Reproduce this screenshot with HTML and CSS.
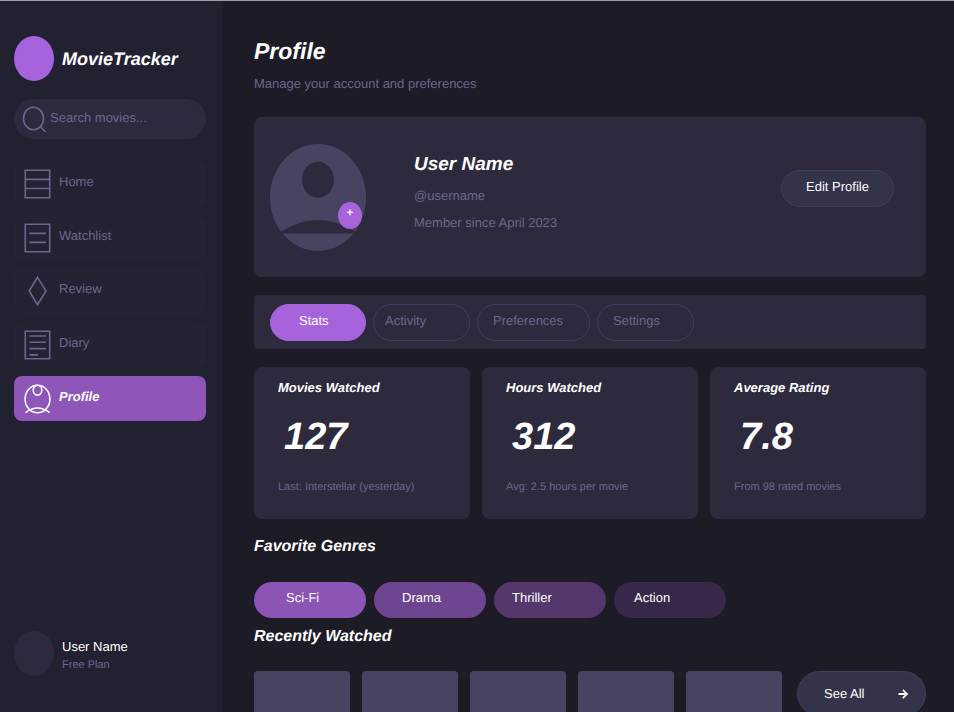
FILE: index.html
```html
<!DOCTYPE html>
<html lang="en">
<head>
<meta charset="utf-8">
<meta name="viewport" content="width=device-width, initial-scale=1">
<title>MovieTracker – Profile</title>
<link rel="stylesheet" href="styles.css">
</head>
<body>
<div class="app">
  <aside class="sidebar">
    <div class="brand">
      <span class="oval"></span>
      <span class="brand-name">MovieTracker</span>
    </div>
    <label class="search">
      <svg class="search-icon" width="26" height="28" viewBox="0 0 26 28" aria-hidden="true"><ellipse cx="11.5" cy="13.5" rx="10" ry="11.3"/><path d="M18 21.5L23.5 27"/></svg>
      <input type="text" placeholder="Search movies..." aria-label="Search movies">
    </label>
    <nav class="nav">
      <a class="nav-item" href="#home">
        <svg width="27" height="30" viewBox="0 0 27 30" aria-hidden="true"><path d="M1.3 1.3H25.7V28.7H1.3ZM1.3 10.4H25.7M1.3 19.5H25.7"/></svg>
        <span>Home</span>
      </a>
      <a class="nav-item" href="#watchlist">
        <svg width="27" height="30" viewBox="0 0 27 30" aria-hidden="true"><path d="M1.3 1.3H25.7V28.7H1.3ZM5.5 10.4H22M5.5 19.4H22"/></svg>
        <span>Watchlist</span>
      </a>
      <a class="nav-item" href="#review">
        <svg width="27" height="30" viewBox="0 0 27 30" aria-hidden="true"><path d="M13.5 1.3L22 15L13.5 28.7L5.2 15Z"/></svg>
        <span>Review</span>
      </a>
      <a class="nav-item" href="#diary">
        <svg width="27" height="30" viewBox="0 0 27 30" aria-hidden="true"><path d="M1.3 1.3H25.7V28.7H1.3ZM5.5 6H22M5.5 12.3H22M5.5 18.6H22M5.5 24.9H14"/></svg>
        <span>Diary</span>
      </a>
      <a class="nav-item active" href="#profile" aria-current="page">
        <svg width="27" height="30" viewBox="0 0 27 30" aria-hidden="true"><ellipse cx="13.5" cy="15" rx="12.4" ry="13.8"/><ellipse cx="13.5" cy="6.2" rx="4.3" ry="4.9"/><path d="M1.5 28.7Q13.5 19.3 25.7 28.7"/></svg>
        <span>Profile</span>
      </a>
    </nav>
    <div class="account">
      <span class="oval oval-muted"></span>
      <div class="account-text">
        <div class="account-name">User Name</div>
        <div class="account-plan">Free Plan</div>
      </div>
    </div>
  </aside>

  <main class="main">
    <header class="page-head">
      <h1>Profile</h1>
      <p>Manage your account and preferences</p>
    </header>

    <section class="card profile">
      <div class="avatar">
        <svg width="96" height="107" viewBox="0 0 96 107" aria-hidden="true">
          <ellipse class="avatar-bg" cx="48" cy="53.5" rx="48" ry="53.5"/>
          <ellipse class="avatar-fg" cx="48" cy="35.7" rx="16" ry="18"/>
          <path class="avatar-fg" d="M8 89.5Q48 62.5 88 89.5Z"/>
        </svg>
        <button class="badge" type="button" aria-label="Change photo">+</button>
      </div>
      <div class="profile-info">
        <h2>User Name</h2>
        <p>@username</p>
        <p>Member since April 2023</p>
      </div>
      <button class="btn btn-edit" type="button">Edit Profile</button>
    </section>

    <div class="tabs">
      <button class="tab tab-on" type="button">Stats</button>
      <button class="tab tab-tight" type="button">Activity</button>
      <button class="tab tab-wide" type="button">Preferences</button>
      <button class="tab" type="button">Settings</button>
    </div>

    <section class="stats">
      <article class="card stat"><h3>Movies Watched</h3><strong>127</strong><p>Last: Interstellar (yesterday)</p></article>
      <article class="card stat"><h3>Hours Watched</h3><strong>312</strong><p>Avg: 2.5 hours per movie</p></article>
      <article class="card stat"><h3>Average Rating</h3><strong>7.8</strong><p>From 98 rated movies</p></article>
    </section>

    <h2 class="section-title">Favorite Genres</h2>
    <div class="genres">
      <button class="genre genre-scifi" type="button">Sci-Fi</button>
      <button class="genre genre-drama" type="button">Drama</button>
      <button class="genre genre-thriller" type="button">Thriller</button>
      <button class="genre genre-action" type="button">Action</button>
    </div>

    <h2 class="section-title">Recently Watched</h2>
    <div class="recent">
      <div class="posters">
        <div class="poster"></div><div class="poster"></div><div class="poster"></div><div class="poster"></div><div class="poster"></div>
      </div>
      <button class="btn btn-all" type="button"><span>See All</span>
        <svg width="10" height="10" viewBox="0 0 10 10" aria-hidden="true"><path d="M0.5 5H8.8M4.8 0.9L9 5L4.8 9.1"/></svg>
      </button>
    </div>
  </main>
</div>
</body>
</html>
```
FILE: styles.css
```css
:root {
  --bg: #1d1b26;
  --side: #222132;
  --card: #2d2a3e;
  --raised: #474361;
  --muted: #6b678b;
  --purple: #a663db;
  --purple-dim: #8d56b8;
  --text: #ffffff;
}

* { box-sizing: border-box; }

body {
  margin: 0;
  background: var(--bg);
  color: var(--text);
  font: 13px/16px "Liberation Sans", Arial, sans-serif;
  text-rendering: geometricPrecision;
}

h1, h2, h3, p { margin: 0; }
h1, h2, h3 { font-style: italic; }
button, input { font: inherit; color: inherit; text-rendering: inherit; }
button { cursor: pointer; border: 0; padding: 0; }
a { color: inherit; text-decoration: none; }
svg { display: block; flex: none; fill: none; stroke: currentColor; }

.app {
  display: grid;
  grid-template-columns: 222px minmax(0, 1fr);
  grid-template-rows: minmax(0, 1fr);
  height: 100vh;
  overflow: hidden;
  border-top: 1px solid #9b9ca2;
}

/* Sidebar */
.sidebar {
  display: flex;
  flex-direction: column;
  padding: 35px 16px 36px 14px;
  background: var(--side);
}

.brand, .account { display: flex; align-items: center; gap: 8px; }
.oval { flex: none; width: 40px; height: 45px; border-radius: 50%; background: var(--purple); }
.oval-muted { background: var(--card); }
.brand-name { font-size: 18px; line-height: 20px; font-weight: bold; font-style: italic; }

.search {
  display: flex;
  align-items: center;
  height: 40px;
  margin-top: 18px;
  padding: 0 16px 0 8px;
  border-radius: 20px;
  background: var(--card);
  color: var(--muted);
}
.search-icon { margin-right: 2px; stroke-width: 1.6; }
.search input {
  flex: 1;
  min-width: 0;
  padding: 0 0 3px;
  border: 0;
  outline: 0;
  background: none;
}
.search input::placeholder { color: var(--muted); opacity: 1; }

.nav {
  display: grid;
  grid-auto-rows: 1fr;
  gap: 9px;
  height: 259px;
  margin-top: 23px;
}
.nav-item {
  display: flex;
  align-items: center;
  gap: 8px;
  padding-left: 10px;
  border-radius: 8px;
  background: #252233;
  color: var(--muted);
}
.nav-item svg { stroke-width: 1.6; }
.nav-item span { padding-bottom: 4px; }
.nav-item.active {
  background: var(--purple-dim);
  color: var(--text);
  font-weight: bold;
  font-style: italic;
}

.account { margin-top: auto; }
.account-text { padding-top: 4px; }
.account-name { line-height: 18px; }
.account-plan { font-size: 11px; line-height: 18px; color: var(--muted); }

/* Main column */
.main { padding: 36px 28px 0 32px; min-width: 0; }

.page-head h1 { font-size: 23px; line-height: 28px; }
.page-head p { margin-top: 11px; color: var(--muted); }

.card { background: var(--card); border-radius: 8px; }

.profile {
  display: flex;
  align-items: center;
  height: 160px;
  margin-top: 25px;
  padding: 0 32px 0 16px;
}
.avatar { position: relative; flex: none; }
.avatar svg { stroke: none; }
.avatar-bg { fill: var(--raised); }
.avatar-fg { fill: var(--card); }
.badge {
  position: absolute;
  right: 4px;
  bottom: 22px;
  width: 24px;
  height: 27px;
  padding-bottom: 4px;
  border-radius: 50%;
  background: var(--purple);
  font-size: 11px;
  font-weight: bold;
}
.profile-info { flex: 1; margin-left: 48px; padding-bottom: 10px; color: var(--muted); }
.profile-info h2 { font-size: 19px; line-height: 24px; color: var(--text); }
.profile-info p { margin-top: 11px; }

.btn {
  border: 1px solid #423e5c;
  background: #33334a;
}
.btn-edit { width: 113px; height: 37px; margin-top: -18px; padding-bottom: 3px; border-radius: 19px; }

.tabs {
  display: flex;
  align-items: center;
  gap: 7px;
  height: 54px;
  margin-top: 18px;
  padding: 0 16px;
  border-radius: 4px;
  background: var(--card);
}
.tab {
  width: 97px;
  height: 37px;
  padding: 0 0 3px 15px;
  border: 1px solid #423e5c;
  border-radius: 19px;
  background: none;
  color: var(--muted);
  text-align: left;
}
.tab-on { width: 96px; padding-left: 28px; border-color: var(--purple); background: var(--purple); color: var(--text); }
.tab-tight { padding-left: 11px; }
.tab-wide { width: 113px; }

.stats {
  display: grid;
  grid-template-columns: repeat(3, 1fr);
  gap: 12px;
  margin-top: 18px;
}
.stat { height: 152px; padding: 13px 24px; }
.stat h3 { font-size: 13px; line-height: 16px; }
.stat strong {
  display: block;
  margin: 17px 6px 18px;
  font-size: 38px;
  line-height: 48px;
  font-style: italic;
}
.stat p { font-size: 11px; color: var(--muted); }

.section-title { font-size: 16px; line-height: 20px; }
.stats + .section-title { margin-top: 18px; }

.genres { display: flex; gap: 8px; margin: 25px 0 9px; }
.genre {
  width: 112px;
  height: 36px;
  padding-bottom: 4px;
  border-radius: 18px;
  text-align: left;
}
.genre-scifi { padding-left: 32px; background: #8b54b5; }
.genre-drama { padding-left: 28px; background: #6e4590; }
.genre-thriller { padding-left: 18px; background: #54386c; }
.genre-action { padding-left: 20px; background: #38294a; }

.recent { display: flex; align-items: flex-start; gap: 15px; margin-top: 24px; }
.posters { display: grid; flex: 1; grid-template-columns: repeat(5, 1fr); gap: 12px; }
.poster { height: 144px; border-radius: 4px; background: var(--raised); }
.btn-all {
  display: flex;
  align-items: center;
  justify-content: space-between;
  width: 129px;
  height: 45px;
  padding: 0 17px 0 26px;
  border-radius: 23px;
}
.btn-all svg { stroke-width: 1.8; }
```
